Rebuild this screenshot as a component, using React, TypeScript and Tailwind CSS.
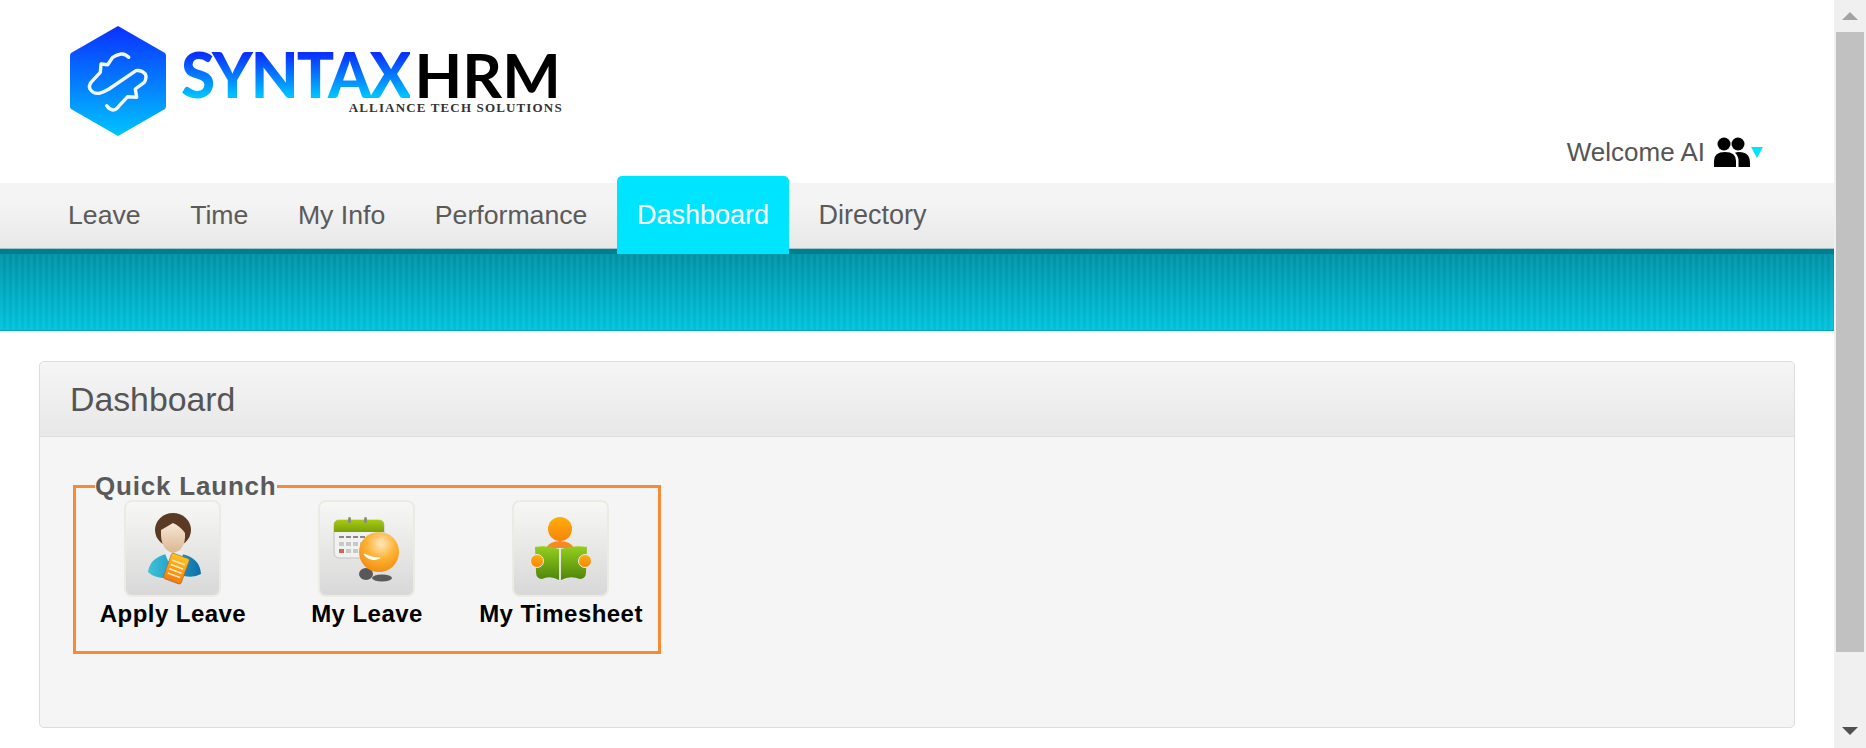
const navItems = ["Leave", "Time", "My Info", "Performance", "Dashboard", "Directory"];

function Emblem() {
  return (
    <svg width="96" height="110" viewBox="0 0 96 110" className="shrink-0">
      <defs>
        <linearGradient id="hexFill" x1="0" y1="0" x2="0" y2="1">
          <stop offset="0" stopColor="#0a30ff" />
          <stop offset="1" stopColor="#00c4ff" />
        </linearGradient>
      </defs>
      <path d="M48 0 L95 27 Q96 28 96 30 L96 80 Q96 82 95 83 L48 110 L1 83 Q0 82 0 80 L0 30 Q0 28 1 27 Z" fill="url(#hexFill)" />
      <path
        d="M58.7 31.3 Q55 27.5 51 28 Q46 29 42.7 31.3 L37.7 38.7 L31 38 L30.3 46.3 L21 56.3 Q18.5 60 20 63 Q23 68 29.3 67.3 Q34 66 39 63 L66 44.7 Q71 43.5 75.3 48 Q77 52 74.3 56.3 L65.3 63 L66.7 71.3 L57.7 70.7 L49.3 79.7 Q46 84 42.7 84 Q39 83.5 36.7 79.7"
        fill="none"
        stroke="#f2f8ff"
        strokeWidth="3.4"
        strokeLinecap="round"
        strokeLinejoin="round"
      />
    </svg>
  );
}

function Logo() {
  return (
    <div className="flex items-start gap-[17px] pl-[70px] pt-[26px]">
      <Emblem />
      <div className="flex flex-col items-end pt-[23px]">
        <div className="flex h-[50px] items-center font-['Lato',sans-serif] text-[62px] leading-[50px]">
          <span className="-ml-[2px] bg-[linear-gradient(180deg,#0a30ff_10%,#00c4ff_95%)] bg-clip-text font-black tracking-[-2px] text-transparent">
            SYNTAX
          </span>
          <span className="ml-[5px] font-bold text-black">HRM</span>
        </div>
        <div className="-mr-[2px] mt-[2px] font-['Liberation_Serif',serif] text-[13px] leading-[13px] font-bold tracking-[1.15px] text-[#333]">
          ALLIANCE TECH SOLUTIONS
        </div>
      </div>
    </div>
  );
}

function PeopleIcon() {
  return (
    <svg width="36" height="30" viewBox="0 0 36 30" className="shrink-0">
      <circle cx="10" cy="7" r="6.5" fill="#000" />
      <circle cx="24" cy="7" r="6.5" fill="#000" />
      <path d="M0 30 V24 Q0 15 11 15 Q22 15 22 24 V30 Z" fill="#000" />
      <path d="M24.5 30 V24 Q24.5 19 21 15.8 Q22.5 15 25 15 Q36 15 36 26 V30 Z" fill="#000" />
    </svg>
  );
}

function ApplyLeaveIcon() {
  return (
    <svg width="93" height="93" viewBox="0 0 93 93">
      <defs>
        <linearGradient id="shirt" x1="0" y1="0" x2="1" y2="0">
          <stop offset="0" stopColor="#3cc4dc" />
          <stop offset="1" stopColor="#0c6fa8" />
        </linearGradient>
        <linearGradient id="face" x1="0" y1="0" x2="0" y2="1">
          <stop offset="0" stopColor="#f6e7d6" />
          <stop offset="1" stopColor="#dcb690" />
        </linearGradient>
        <linearGradient id="clip" x1="0" y1="0" x2="0" y2="1">
          <stop offset="0" stopColor="#ffc21e" />
          <stop offset="1" stopColor="#f47a10" />
        </linearGradient>
      </defs>
      <path d="M22 70 Q24 56 40 52 L56 52 Q74 56 75 72 Q68 76 58 74 L40 76 Q28 76 22 70 Z" fill="url(#shirt)" />
      <path d="M38 49 L58 49 L55 59 L42 59 Z" fill="#e9edf0" />
      <ellipse cx="47" cy="28" rx="18" ry="17" fill="#5b3a24" />
      <path d="M35 28 Q42 24 47 21 Q54 24 59 31 Q60 48 47 51 Q34 48 35 28 Z" fill="url(#face)" />
      <g transform="rotate(20 50 66)">
        <rect x="41" y="53" width="19" height="27" rx="2" fill="url(#clip)" stroke="#8a6a4a" strokeWidth="0.6" />
        <path d="M44 60 H57 M44 64.5 H57 M44 69 H57 M44 73.5 H57" stroke="#ffe9b8" strokeWidth="1.6" />
      </g>
    </svg>
  );
}

function MyLeaveIcon() {
  return (
    <svg width="93" height="93" viewBox="0 0 93 93">
      <defs>
        <linearGradient id="calTop" x1="0" y1="0" x2="0" y2="1">
          <stop offset="0" stopColor="#a4cb10" />
          <stop offset="1" stopColor="#7ba00c" />
        </linearGradient>
        <radialGradient id="ball" cx="0.55" cy="0.3" r="0.75">
          <stop offset="0" stopColor="#ffe7bd" />
          <stop offset="0.5" stopColor="#ffb030" />
          <stop offset="1" stopColor="#ee8a10" />
        </radialGradient>
      </defs>
      <rect x="14" y="18" width="50" height="38" rx="5" fill="#f1f1ef" stroke="#c2c2c0" />
      <path d="M14 30 V23 Q14 18 19 18 H59 Q64 18 64 23 V30 Z" fill="url(#calTop)" />
      <rect x="28" y="15" width="3" height="6" rx="1.5" fill="#8b8b80" />
      <rect x="44" y="15" width="3" height="6" rx="1.5" fill="#8b8b80" />
      <path d="M19 35 H58" stroke="#666" strokeWidth="1.4" strokeDasharray="5 2" />
      <g fill="#c8c8c8">
        <rect x="19" y="40" width="5" height="4" />
        <rect x="26" y="40" width="5" height="4" />
        <rect x="33" y="40" width="5" height="4" />
        <rect x="40" y="40" width="5" height="4" />
        <rect x="26" y="47" width="5" height="4" />
        <rect x="33" y="47" width="5" height="4" />
      </g>
      <rect x="19" y="47" width="5" height="4" fill="#c9685a" />
      <ellipse cx="46" cy="72" rx="7" ry="6" fill="#585858" />
      <ellipse cx="62" cy="76" rx="10" ry="3.5" fill="#5a5a5a" />
      <circle cx="59" cy="50" r="20" fill="url(#ball)" />
      <path d="M44 52 Q50 60 60 56 Q52 56 44 52 Z" fill="#fff" stroke="#fff" strokeWidth="1.2" />
    </svg>
  );
}

function TimesheetIcon() {
  return (
    <svg width="93" height="93" viewBox="0 0 93 93">
      <defs>
        <linearGradient id="head" x1="0" y1="0" x2="0" y2="1">
          <stop offset="0" stopColor="#ffad08" />
          <stop offset="1" stopColor="#f7850c" />
        </linearGradient>
        <linearGradient id="book" x1="0" y1="0" x2="0" y2="1">
          <stop offset="0" stopColor="#93cf1f" />
          <stop offset="1" stopColor="#4f840a" />
        </linearGradient>
      </defs>
      <circle cx="46" cy="27" r="12" fill="url(#head)" />
      <path d="M32 46 Q36 39 46 39 Q56 39 60 46 Z" fill="#f58a22" />
      <path d="M21 45 Q33 43 45 47 V78 Q36 73 28 77 Q22 77 22 70 Z" fill="url(#book)" />
      <path d="M47 47 Q59 43 73 45 L72 70 Q72 77 66 77 Q56 73 47 78 Z" fill="url(#book)" />
      <circle cx="23" cy="59" r="6.5" fill="url(#head)" stroke="#eee" strokeWidth="1" />
      <circle cx="71" cy="59" r="6.5" fill="url(#head)" stroke="#eee" strokeWidth="1" />
    </svg>
  );
}

function Launch({ label, children }: { label: string; children: React.ReactNode }) {
  return (
    <div className="flex w-[194px] flex-col items-center">
      <div className="mr-[2px] flex h-[97px] w-[97px] items-center justify-center rounded-[8px] border-2 border-[#ebebe3] bg-[linear-gradient(180deg,#f7f7f5,#d8d8d8)]">
        {children}
      </div>
      <div className="-mt-[1px] text-[24px] leading-[36px] font-bold tracking-[0.45px] whitespace-nowrap text-black">
        {label}
      </div>
    </div>
  );
}

export default function App() {
  return (
    <div className="flex h-screen w-full overflow-hidden bg-white font-['Liberation_Sans',Arial,sans-serif]">
      <div className="min-w-0 flex-1">
        <header className="flex h-[183px] justify-between">
          <Logo />
          <div className="flex items-center gap-[9px] self-end pr-[71px] pb-[16px]">
            <span className="text-[26px] leading-[30px] text-[#555]">Welcome AI</span>
            <div className="flex items-center gap-[1px]">
              <PeopleIcon />
              <span className="h-0 w-0 border-x-[6px] border-t-[11px] border-x-transparent border-t-[#00e5ff]" />
            </div>
          </div>
        </header>

        <nav className="h-[65px] bg-[linear-gradient(180deg,#f4f4f4_30%,#e8e8e8)]">
          <ul className="flex h-full gap-[9.5px] pl-[48px]">
            {navItems.map((item) =>
              item === "Dashboard" ? (
                <li
                  key={item}
                  className="z-10 -mt-[7px] flex h-[78px] items-start rounded-t-[5px] bg-[#00e5ff] px-[20px] pt-[20px] text-[27px] leading-[38px] text-white"
                >
                  {item}
                </li>
              ) : (
                <li
                  key={item}
                  className={
                    item === "Directory"
                      ? "px-[20px] pt-[13px] text-[27px] leading-[38px] text-[#5a5a5a]"
                      : "px-[20px] pt-[13px] text-[26.67px] leading-[38px] text-[#5a5a5a]"
                  }
                >
                  {item}
                </li>
              ),
            )}
          </ul>
        </nav>

        <div className="h-[83px] border-t border-b border-t-[#9fc4c9] border-b-[#00a5bb] bg-[linear-gradient(180deg,#007f90_0px,#007f90_5px,transparent_5px),repeating-linear-gradient(90deg,rgba(255,255,255,0.035)_0px,rgba(255,255,255,0.035)_3px,rgba(0,0,0,0.025)_3px,rgba(0,0,0,0.025)_6px),linear-gradient(180deg,#0091a5,#00c5de)]" />

        <section className="mx-[39px] mt-[30px] h-[367px] rounded-[5px] border border-[#dddddd] bg-[#f5f5f5]">
          <div className="flex h-[75px] items-center rounded-t-[5px] border-b border-[#dddddd] bg-[linear-gradient(180deg,#f5f5f5,#e8e8e8)] pl-[30px]">
            <h1 className="text-[33.8px] leading-[40px] font-normal text-[#555]">Dashboard</h1>
          </div>
          <div className="pt-[34px] pl-[33px]">
            <fieldset className="h-[183px] w-[586px] border-[3px] border-[#f68b37]">
              <legend className="ml-[19px] text-[26px] leading-[31px] font-bold tracking-[0.8px] text-[#5a5a5a]">
                Quick Launch
              </legend>
              <div className="-mt-[2px] flex">
                <Launch label="Apply Leave">
                  <ApplyLeaveIcon />
                </Launch>
                <Launch label="My Leave">
                  <MyLeaveIcon />
                </Launch>
                <Launch label="My Timesheet">
                  <TimesheetIcon />
                </Launch>
              </div>
            </fieldset>
          </div>
        </section>
      </div>

      <aside className="flex w-[32px] shrink-0 flex-col items-center bg-[#f0f0f0]">
        <div className="flex h-[32px] w-full items-center justify-center">
          <span className="h-0 w-0 border-x-[8px] border-b-[8px] border-x-transparent border-b-[#a3a3a3]" />
        </div>
        <div className="h-[620px] w-[28px] bg-[#c1c1c1]" />
        <div className="flex flex-1 items-end justify-center pb-[13px]">
          <span className="h-0 w-0 border-x-[8px] border-t-[8px] border-x-transparent border-t-[#505050]" />
        </div>
      </aside>
    </div>
  );
}
